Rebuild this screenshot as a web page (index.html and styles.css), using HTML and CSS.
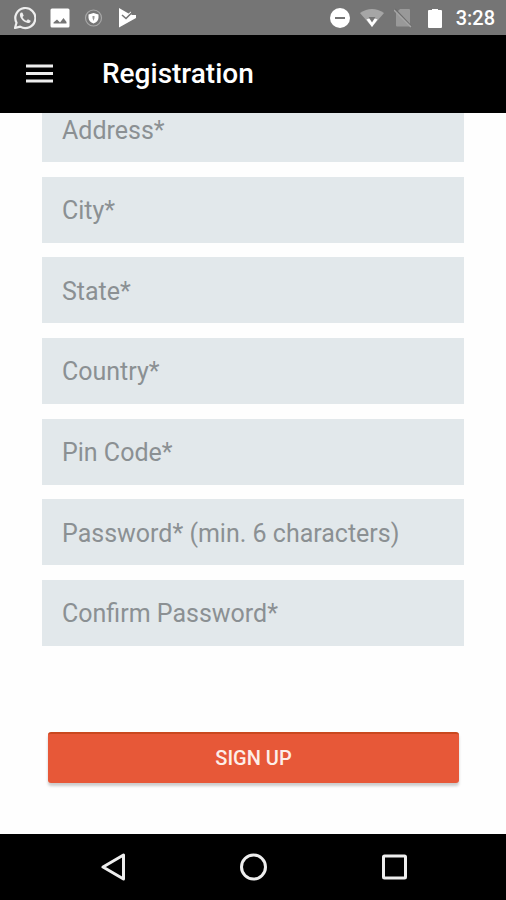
FILE: index.html
```html
<!DOCTYPE html>
<html lang="en">
<head>
<meta charset="utf-8">
<meta name="viewport" content="width=device-width, initial-scale=1">
<title>Registration</title>
<link rel="stylesheet" href="styles.css">
</head>
<body>
<div class="status">
  <div class="notices">
    <svg width="22" height="24" viewBox="1 0 22 24" aria-hidden="true"><path d="M2 22l1.500-5.300A10 10 0 1 1 7.200 20.600z" fill="none" stroke="#eee" stroke-width="2.200" stroke-linejoin="round"/><path d="M8.300 6.600c-.9.300-1.500 1.300-1.400 2.500.4 3.800 4 7.400 8 7.900 1.400.1 2.700-.8 2.800-2.300l-2.800-1.400-1.400 1.500c-1.900-.7-3.300-2.100-4-3.800l1.200-1.300-1.200-3z" fill="#eee"/></svg>
    <svg width="20" height="20" viewBox="0 0 20 20" aria-hidden="true"><path fill="#fff" fill-rule="evenodd" d="M2 .5h16a1.500 1.500 0 0 1 1.500 1.500v16a1.500 1.500 0 0 1-1.500 1.500H2A1.500 1.500 0 0 1 .5 18V2A1.500 1.500 0 0 1 2 .5zM3.500 15.500h13v-1.500l-3-4-3.500 4.500-3-3-3.500 3z"/></svg>
    <svg width="20" height="18" viewBox="0 0 20 18" aria-hidden="true"><circle cx="9.500" cy="9" r="8" fill="none" stroke="#a8a8a8" stroke-width="1.200"/><path d="M9.500 4l5 1.500v3c0 3-2 5-5 6-3-1-5-3-5-6v-3z" fill="#fff"/><path d="M8.500 7h2v2l-1 3-1-3z" fill="#999"/></svg>
    <svg width="18" height="20" viewBox="0 0 18 20" aria-hidden="true"><path d="M1 0l9.500 5.500 2.500-2 .5 3.500 4.500 0v3L1 19.500z" fill="#fff"/><path d="M4 7l4 3.500 6-6" fill="none" stroke="#757575" stroke-width="1.600"/></svg>
  </div>
  <div class="system">
    <svg width="20" height="22" viewBox="0 0 20 22" aria-hidden="true"><circle cx="10" cy="11" r="10" fill="#fff"/><path d="M5 11h10" stroke="#757575" stroke-width="2"/></svg>
    <svg width="24" height="20" viewBox="0 0 24 20" aria-hidden="true"><path d="M0 5Q12-3 24 5L12 19z" fill="#a6a6a6"/><path d="M6.500 11.500q5.500-3 11 0L12 19z" fill="#fff"/><path d="M8.500 9h7L12 14.500z" fill="#757575"/></svg>
    <svg width="18" height="20" viewBox="0 0 18 20" aria-hidden="true"><path d="M6 1h9a1 1 0 0 1 1 1v16.500H3a1 1 0 0 1-1-1V5z" fill="#999"/><path d="M1 1l17 18" stroke="#6c6c6c" stroke-width="1.500"/><path d="M0 2l17 17" stroke="#a6a6a6" stroke-width="1.500"/></svg>
    <svg class="battery" width="14" height="20" viewBox="0 0 14 20" aria-hidden="true"><path d="M4 1h6v1h3a1 1 0 0 1 1 1v16a1 1 0 0 1-1 1H1a1 1 0 0 1-1-1V3a1 1 0 0 1 1-1h3z" fill="#fff"/></svg>
    <time>3:28</time>
  </div>
</div>
<header class="bar">
  <button class="menu" type="button" aria-label="Menu"><svg width="28" height="20" viewBox="0 0 28 20"><path d="M0 2h27M0 9.500h27M0 17h27" stroke="#eee" stroke-width="3"/></svg></button>
  <h1>Registration</h1>
</header>
<main>
  <form>
    <div class="fields">
      <input type="text" aria-label="Address" placeholder="Address*">
      <input type="text" aria-label="City" placeholder="City*">
      <input type="text" aria-label="State" placeholder="State*">
      <input type="text" aria-label="Country" placeholder="Country*">
      <input type="text" aria-label="Pin Code" placeholder="Pin Code*">
      <input type="password" aria-label="Password" placeholder="Password* (min. 6 characters)">
      <input type="password" aria-label="Confirm Password" placeholder="Confirm Password*">
    </div>
    <button class="submit" type="submit">SIGN UP</button>
  </form>
</main>
<nav class="nav" aria-label="System">
  <button type="button" aria-label="Back"><svg width="28" height="28" viewBox="0 0 28 28"><path d="M5 14L25.500 2v24z"/></svg></button>
  <button type="button" aria-label="Home"><svg width="28" height="28" viewBox="0 0 28 28"><circle cx="14.500" cy="14" r="12"/></svg></button>
  <button type="button" aria-label="Recent apps"><svg width="28" height="28" viewBox="0 0 28 28"><rect x="3.500" y="3" width="22" height="22" rx="1"/></svg></button>
</nav>
</body>
</html>
```
FILE: styles.css
```css
* { box-sizing: border-box; }

body {
  margin: 0;
  min-height: 100vh;
  display: flex;
  flex-direction: column;
  background: #fefefe;
  font-family: Roboto, sans-serif;
}

button {
  border: 0;
  padding: 0;
  background: none;
  font-family: inherit;
}

svg { display: block; }

.status {
  height: 35px;
  padding: 0 11px 0 14px;
  display: flex;
  align-items: center;
  justify-content: space-between;
  background: #757575;
  color: #fff;
}

.notices, .system { display: flex; align-items: center; }
.notices { gap: 14px; }
.system { gap: 10px; }
.battery { margin: 0 4px 0 6px; }

time {
  font-size: 20px;
  line-height: 24px;
  font-weight: 500;
}

.bar {
  height: 78px;
  padding: 0 26px;
  display: flex;
  align-items: center;
  gap: 48px;
  background: #000;
  color: #fff;
  position: relative;
  z-index: 1;
}

h1 {
  margin: 0;
  font-size: 28px;
  line-height: 32px;
  font-weight: 500;
}

main {
  flex: 1;
  display: flex;
  padding: 0 42px;
}

/* The list is scrolled slightly under the header. */
form {
  flex: 1;
  min-width: 0;
  margin-top: -17px;
  padding-bottom: 51px;
  display: flex;
  flex-direction: column;
  gap: 86px;
}

.fields {
  flex: 1;
  display: flex;
  flex-direction: column;
  justify-content: space-between;
}

input {
  width: 100%;
  height: 66px;
  padding: 2px 20px 0;
  border: 0;
  border-radius: 0;
  background: #e2e8eb;
  color: #333;
  font: 25px/32px Roboto, sans-serif;
}

input::placeholder { color: #8b9093; opacity: 1; }

.submit {
  height: 51px;
  margin: 0 5px 0 6px;
  padding-bottom: 2px;
  border-top: 2px solid #c9481f;
  border-radius: 3px;
  background: #e75838;
  box-shadow: 0 3px 3px rgba(0, 0, 0, 0.2);
  color: #fdeee9;
  font-size: 20px;
  font-weight: 500;
}

.nav {
  height: 66px;
  padding: 0 42px;
  display: grid;
  grid-template-columns: repeat(3, 1fr);
  align-items: center;
  background: #000;
}

.nav button { display: flex; justify-content: center; }

.nav svg {
  fill: none;
  stroke: #eee;
  stroke-width: 3px;
  stroke-linejoin: round;
}
```
